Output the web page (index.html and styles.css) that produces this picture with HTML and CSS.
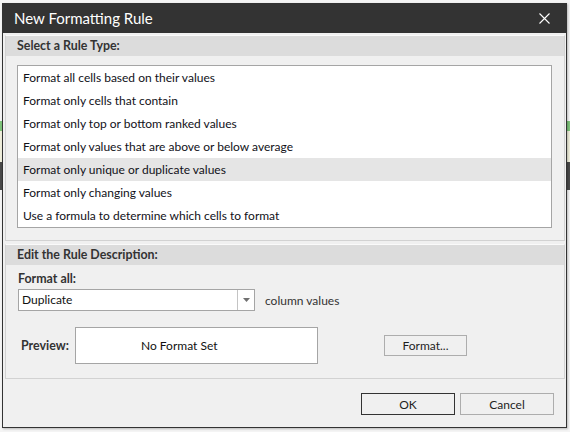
FILE: index.html
```html
<html>
  <head>
    <title>New Formatting Rule</title>
    <link rel="stylesheet" href="styles.css">
  </head>
  <body>
    <div class="dialog">
      <div class="titlebar">
        <span class="title">New Formatting Rule</span>
        <span class="close">
          <svg width="11" height="11" viewBox="0 0 11 11">
            <path d="M0.5 0.5 L10.5 10.5 M10.5 0.5 L0.5 10.5" stroke="#ffffff" stroke-width="1.1" fill="none" />
          </svg>
        </span>
      </div>
      <div class="content">
        <div class="group group-type">
          <div class="group-head">Select a Rule Type:</div>
          <div class="rule-list">
            <div class="rule">Format all cells based on their values</div>
            <div class="rule">Format only cells that contain</div>
            <div class="rule">Format only top or bottom ranked values</div>
            <div class="rule">Format only values that are above or below average</div>
            <div class="rule selected">Format only unique or duplicate values</div>
            <div class="rule">Format only changing values</div>
            <div class="rule">Use a formula to determine which cells to format</div>
          </div>
        </div>
        <div class="group group-desc">
          <div class="group-head">Edit the Rule Description:</div>
          <div class="desc">
            <div class="label">Format all:</div>
            <div class="select-row">
              <div class="combo">
                <span class="combo-value">Duplicate</span>
                <span class="combo-arrow">
                  <svg width="7" height="4" viewBox="0 0 7 4">
                    <path d="M0 0 L7 0 L3.5 4 Z" fill="#707070" />
                  </svg>
                </span>
              </div>
              <span class="combo-after">column values</span>
            </div>
            <div class="preview-row">
              <span class="label preview-label">Preview:</span>
              <div class="preview-box">No Format Set</div>
              <button class="btn btn-format">Format...</button>
            </div>
          </div>
        </div>
        <div class="actions">
          <button class="btn btn-ok">OK</button>
          <button class="btn btn-cancel">Cancel</button>
        </div>
      </div>
    </div>
  </body>
</html>
```
FILE: styles.css
```css
body {
  margin: 0;
  font-family: Lato, "Liberation Sans", sans-serif;
  font-size: 12px;
  color: #1e1e1e;
  /* bits of the spreadsheet peeking out behind the dialog */
  background: linear-gradient(180deg, #f4f4f4 0, #f4f4f4 121px, #7ec47a 121px, #7ec47a 131px,
    #efeedb 131px, #efeedb 162px, #4a4a4a 162px, #4a4a4a 190px, #f4f4f4 190px);
  height: 432px;
  overflow: hidden;
}

.dialog {
  margin: 3px 0 0 2px;
  width: 565px;
  height: 425px;
  box-sizing: border-box;
  border: 1px solid #333333;
  border-top: none;
  background: #f0f0f0;
  display: flex;
  flex-direction: column;
  box-shadow: 1px 1px 2px rgba(0, 0, 0, 0.25);
}

.titlebar {
  height: 30px;
  background: #333333;
  color: #ffffff;
  display: flex;
  align-items: center;
  justify-content: space-between;
  padding: 0 17px 0 12px;
  margin: 0 -1px;
}

.title {
  font-size: 15px;
  padding-bottom: 1px;
}

.close {
  display: flex;
  padding-top: 1px;
}

.content {
  padding: 2px 1px 0 2px;
  display: flex;
  flex-direction: column;
}

.group {
  border: 1px solid #d2d2d2;
  border-top-color: #fafafa;
}

.group-head {
  height: 20px;
  line-height: 20px;
  background: #dcdcdc;
  font-weight: bold;
  color: #333333;
  padding-left: 11px;
  font-size: 12.4px;
}

.group-type {
  height: 206px;
  box-sizing: border-box;
}

.rule-list {
  margin: 9px 12px 0 11px;
  height: 163px;
  box-sizing: border-box;
  border: 1px solid #a5a5a5;
  background: #ffffff;
}

.rule {
  height: 23px;
  line-height: 23px;
  padding-left: 5px;
  color: #111118;
}

.rule.selected {
  background: #e5e5e5;
}

.group-desc {
  margin-top: 3px;
  height: 135px;
  box-sizing: border-box;
}

.desc {
  padding: 6px 0 0 12px;
}

.label {
  font-weight: bold;
  color: #333333;
  font-size: 12.4px;
  line-height: 16px;
}

.select-row {
  display: flex;
  align-items: center;
  gap: 10px;
  margin-top: 2px;
}

.combo {
  width: 237px;
  height: 22px;
  box-sizing: border-box;
  border: 1px solid #a5a5a5;
  background: #ffffff;
  display: flex;
}

.combo-value {
  flex: 1;
  line-height: 20px;
  padding-left: 3px;
  color: #111111;
}

.combo-arrow {
  width: 16px;
  border-left: 1px solid #c4c4c4;
  display: flex;
  align-items: center;
  justify-content: center;
}

.combo-after {
  color: #333333;
}

.preview-row {
  display: flex;
  align-items: center;
  margin-top: 16px;
}

.preview-label {
  width: 54px;
  padding-left: 3px;
  padding-top: 1px;
}

.preview-box {
  width: 243px;
  height: 37px;
  box-sizing: border-box;
  border: 1px solid #a5a5a5;
  background: #ffffff;
  display: flex;
  align-items: center;
  padding-left: 65px;
  color: #111111;
}

.btn {
  font-family: Lato, "Liberation Sans", sans-serif;
  font-size: 12px;
  color: #1e1e1e;
  background: #f0f0f0;
  border: 1px solid #adadad;
  height: 22px;
  padding: 0;
  margin: 0;
}

.btn-format {
  width: 83px;
  height: 21px;
  margin-left: 66px;
}

.actions {
  display: flex;
  justify-content: flex-end;
  gap: 5px;
  padding: 14px 11px 0 0;
}

.btn-ok,
.btn-cancel {
  width: 94px;
}

.btn-ok {
  border-color: #333333;
}
```
